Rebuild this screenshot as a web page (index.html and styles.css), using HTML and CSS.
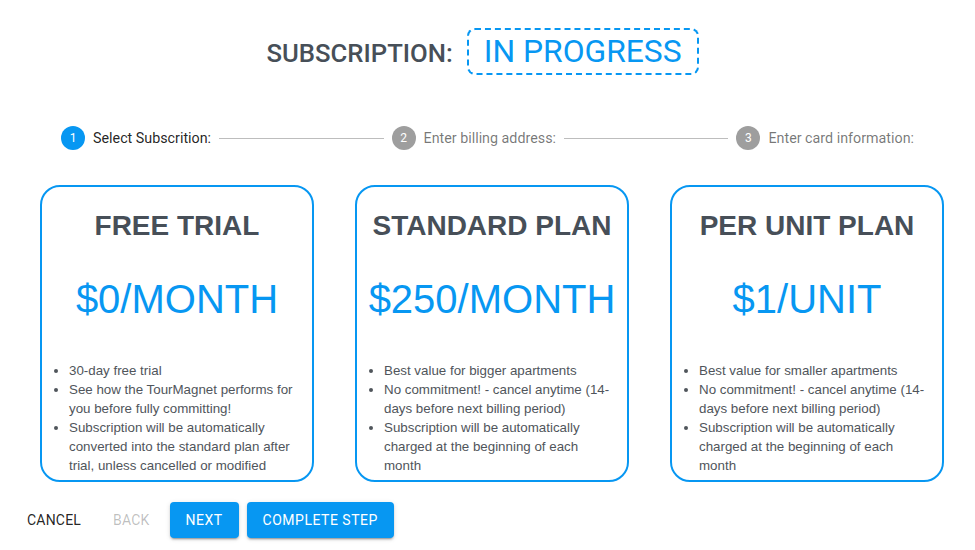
FILE: index.html
```html
<!DOCTYPE html>
<html>
<head>
<meta charset="utf-8">
<link rel="stylesheet" href="styles.css">
</head>
<body>
<div class="page">
  <header class="status">
    <span class="status-label">SUBSCRIPTION:</span>
    <span class="status-badge">IN PROGRESS</span>
  </header>

  <nav class="stepper">
    <div class="step active"><span class="step-num">1</span><span class="step-label">Select Subscrition:</span></div>
    <div class="step-line"></div>
    <div class="step"><span class="step-num">2</span><span class="step-label">Enter billing address:</span></div>
    <div class="step-line"></div>
    <div class="step"><span class="step-num">3</span><span class="step-label">Enter card information:</span></div>
  </nav>

  <section class="plans">
    <div class="plan">
      <h2 class="plan-title">FREE TRIAL</h2>
      <div class="plan-price">$0/MONTH</div>
      <ul class="plan-features">
        <li>30-day free trial</li>
        <li>See how the TourMagnet performs for you before fully committing!</li>
        <li>Subscription will be automatically converted into the standard plan after trial, unless cancelled or modified</li>
      </ul>
    </div>
    <div class="plan">
      <h2 class="plan-title">STANDARD PLAN</h2>
      <div class="plan-price">$250/MONTH</div>
      <ul class="plan-features">
        <li>Best value for bigger apartments</li>
        <li>No commitment! - cancel anytime (14-days before next billing period)</li>
        <li>Subscription will be automatically charged at the beginning of each month</li>
      </ul>
    </div>
    <div class="plan">
      <h2 class="plan-title">PER UNIT PLAN</h2>
      <div class="plan-price">$1/UNIT</div>
      <ul class="plan-features">
        <li>Best value for smaller apartments</li>
        <li>No commitment! - cancel anytime (14-days before next billing period)</li>
        <li>Subscription will be automatically charged at the beginning of each month</li>
      </ul>
    </div>
  </section>

  <footer class="actions">
    <button class="btn btn-text">CANCEL</button>
    <button class="btn btn-text btn-disabled">BACK</button>
    <button class="btn btn-primary">NEXT</button>
    <button class="btn btn-primary">COMPLETE STEP</button>
  </footer>
</div>
</body>
</html>
```

FILE: styles.css
```css
* { box-sizing: border-box; }
html, body { margin: 0; padding: 0; background: #fff; }
body { font-family: Roboto, "Liberation Sans", Arial, sans-serif; }

.page { width: 975px; height: 550px; overflow: hidden; }

.status {
  display: flex;
  justify-content: center;
  align-items: baseline;
  gap: 14px;
  padding-top: 28px;
  padding-right: 10px;
}
.status-label {
  font-size: 25.7px;
  font-weight: 500;
  color: #474f58;
}
.status-badge {
  display: inline-block;
  height: 47px;
  line-height: 43px;
  padding: 0 15px;
  border: 2px dashed #0797f2;
  border-radius: 8px;
  font-size: 31.8px;
  color: #0797f2;
}

.stepper {
  display: flex;
  align-items: center;
  margin: 51px 61px 0 61px;
  height: 24px;
}
.step { display: flex; align-items: center; gap: 8px; }
.step-num {
  width: 24px; height: 24px;
  border-radius: 50%;
  background: #9e9e9e;
  color: #fff;
  font-size: 12px;
  display: flex; align-items: center; justify-content: center;
}
.step.active .step-num { background: #0797f2; }
.step-label { font-size: 14.3px; color: rgba(0,0,0,0.54); }
.step.active .step-label { color: rgba(0,0,0,0.87); }
.step-line { flex: 1; height: 1px; background: #bdbdbd; margin: 0 8px; }

.plans {
  display: flex;
  gap: 41px;
  margin-top: 35px;
  padding-left: 40px;
}
.plan {
  width: 274px;
  height: 297px;
  border: 2px solid #0797f2;
  border-radius: 20px;
  padding-top: 23px;
  font-family: "Liberation Sans", Arial, sans-serif;
}
.plan-title {
  margin: 0;
  text-align: center;
  font-size: 28px;
  line-height: 32px;
  font-weight: bold;
  color: #474f58;
}
.plan-price {
  margin-top: 34px;
  text-align: center;
  font-size: 40px;
  line-height: 46px;
  color: #0797f2;
}
.plan-features {
  margin: 39px 13px 0 0;
  padding-left: 27px;
  font-size: 13.33px;
  line-height: 19px;
  color: #50555b;
}

.actions {
  display: flex;
  align-items: center;
  margin-top: 20px;
  padding-left: 11px;
}
.btn {
  height: 36px;
  min-width: 64px;
  padding: 0 16px;
  border: none;
  border-radius: 4px;
  font-family: Roboto, "Liberation Sans", Arial, sans-serif;
  font-size: 14px;
  letter-spacing: 0.5px;
  background: transparent;
  cursor: pointer;
}
.btn-text { color: rgba(0,0,0,0.87); letter-spacing: 0.2px; }
.btn-disabled { color: rgba(0,0,0,0.26); margin-right: 4px; }
.btn-primary {
  background: #0797f2;
  color: #fff;
  margin-right: 8px;
  box-shadow: 0 3px 1px -2px rgba(0,0,0,.2), 0 2px 2px 0 rgba(0,0,0,.14), 0 1px 5px 0 rgba(0,0,0,.12);
}
```
